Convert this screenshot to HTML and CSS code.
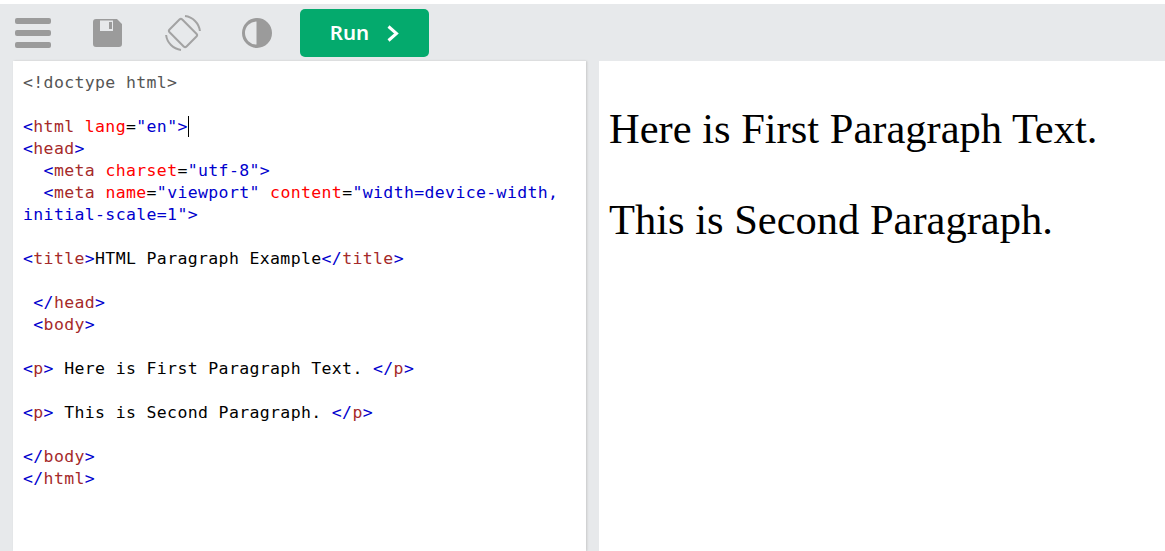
FILE: index.html
```html
<!doctype html>
<html lang="en">
<head>
<meta charset="utf-8">
<title>HTML Paragraph Example</title>
<link rel="stylesheet" href="styles.css">
</head>
<body>
<div class="app">
  <header class="toolbar">
    <svg class="icon icon-menu" viewBox="0 0 36 30" width="36" height="30"><rect x="0" y="0" width="36" height="6" rx="2"/><rect x="0" y="12" width="36" height="6" rx="2"/><rect x="0" y="24" width="36" height="6" rx="2"/></svg>
    <svg class="icon icon-save" viewBox="0 0 29 28" width="29" height="28"><path fill-rule="evenodd" d="M3 0h21l5 5v20a3 3 0 0 1-3 3H3a3 3 0 0 1-3-3V3a3 3 0 0 1 3-3zM7 1.500v10.500h13V1.500zM16 3h3v7h-3z"/></svg>
    <svg class="icon icon-rotate" viewBox="0 0 36 36" width="36" height="36"><rect x="9" y="6" width="18" height="24" rx="2" transform="rotate(-45 18 18)" fill="none" stroke-width="2"/><path d="M20 1.100A17 17 0 0 1 34.900 16M16 34.900A17 17 0 0 1 1.100 20" fill="none" stroke-width="2"/></svg>
    <svg class="icon icon-contrast" viewBox="0 0 32 32" width="32" height="32"><path fill-rule="evenodd" d="M16 1a15 15 0 1 0 0 30a15 15 0 0 0 0-30zM15.500 4.500a11.500 11.500 0 0 0 0 23z"/></svg>
    <button class="run" type="button">Run<svg class="chev" viewBox="0 0 12 17" width="12" height="17"><path d="M1.500 1.500l8 7l-8 7" fill="none" stroke="#fff" stroke-width="3"/></svg></button>
  </header>
  <main class="panes">
    <section class="editor">
<div class="ln dt">&lt;!doctype html&gt;</div>
<div class="ln"> </div>
<div class="ln"><b>&lt;</b><i>html</i> <u>lang</u>=<s>"en"</s><b>&gt;</b><span class="caret"></span></div>
<div class="ln"><b>&lt;</b><i>head</i><b>&gt;</b></div>
<div class="ln">  <b>&lt;</b><i>meta</i> <u>charset</u>=<s>"utf-8"</s><b>&gt;</b></div>
<div class="ln">  <b>&lt;</b><i>meta</i> <u>name</u>=<s>"viewport"</s> <u>content</u>=<s>"width=device-width,</s></div>
<div class="ln"><s>initial-scale=1"</s><b>&gt;</b></div>
<div class="ln"> </div>
<div class="ln"><b>&lt;</b><i>title</i><b>&gt;</b>HTML Paragraph Example<b>&lt;/</b><i>title</i><b>&gt;</b></div>
<div class="ln"> </div>
<div class="ln"> <b>&lt;/</b><i>head</i><b>&gt;</b></div>
<div class="ln"> <b>&lt;</b><i>body</i><b>&gt;</b></div>
<div class="ln"> </div>
<div class="ln"><b>&lt;</b><i>p</i><b>&gt;</b> Here is First Paragraph Text. <b>&lt;/</b><i>p</i><b>&gt;</b></div>
<div class="ln"> </div>
<div class="ln"><b>&lt;</b><i>p</i><b>&gt;</b> This is Second Paragraph. <b>&lt;/</b><i>p</i><b>&gt;</b></div>
<div class="ln"> </div>
<div class="ln"><b>&lt;/</b><i>body</i><b>&gt;</b></div>
<div class="ln"><b>&lt;/</b><i>html</i><b>&gt;</b></div>
    </section>
    <section class="preview">
      <p>Here is First Paragraph Text.</p>
      <p>This is Second Paragraph.</p>
    </section>
  </main>
</div>
</body>
</html>
```
FILE: styles.css
```css
html, body {
  margin: 0;
  height: 100%;
  background: #fff;
  overflow: hidden;
}
.app {
  height: 100%;
  box-sizing: border-box;
  padding-top: 4px;
  display: flex;
  flex-direction: column;
}
.toolbar {
  height: 57px;
  flex: none;
  background: #e7e9eb;
  display: flex;
  align-items: center;
  padding-left: 15px;
  box-sizing: border-box;
}
.icon {
  flex: none;
  fill: #9b9b9b;
  stroke: #a3a3a3;
  stroke-width: 0;
}
.icon-menu { margin-top: 1px; }
.icon-save { margin-left: 42px; margin-top: 1px; }
.icon-rotate { margin-left: 43px; margin-top: 1px; }
.icon-contrast { margin-left: 40px; margin-top: 1px; }
.run {
  margin-left: 27px;
  margin-top: 1px;
  width: 129px;
  height: 48px;
  border: 0;
  border-radius: 5px;
  background: #04aa6d;
  color: #fff;
  font: 600 20.500px "Noto Sans", sans-serif;
  display: flex;
  align-items: center;
  justify-content: center;
  gap: 18px;
  padding: 0 0 3px;
}
.chev { flex: none; margin-top: 3px; }
.panes {
  flex: 1;
  min-height: 0;
  display: flex;
  background: #e7e9eb;
  padding-left: 13px;
}
.editor {
  width: 573px;
  flex: none;
  background: #fff;
  padding: 11px 0 0 10px;
  box-sizing: border-box;
  font: 16.500px/22px "DejaVu Sans Mono", monospace;
  letter-spacing: 0.36px;
  color: #000;
  box-shadow: 1px 0 2px #c8c8c8;
}
.ln {
  white-space: pre;
  height: 22px;
}
.ln b { font-weight: normal; color: #0000cd; }
.ln i { font-style: normal; color: #a52a2a; }
.ln u { text-decoration: none; color: #f00; }
.ln s { text-decoration: none; color: #0000cd; }
.dt { color: #555; }
.caret {
  display: inline-block;
  width: 0;
  height: 21px;
  border-left: 1px solid #000;
  vertical-align: -5px;
}
.preview {
  margin-left: 13px;
  flex: 1;
  background: #fff;
  padding: 3px 10px 0 10px;
  font: 42.500px/52px "Liberation Serif", serif;
  color: #000;
}
.preview p { margin: 39px 0; }
```
